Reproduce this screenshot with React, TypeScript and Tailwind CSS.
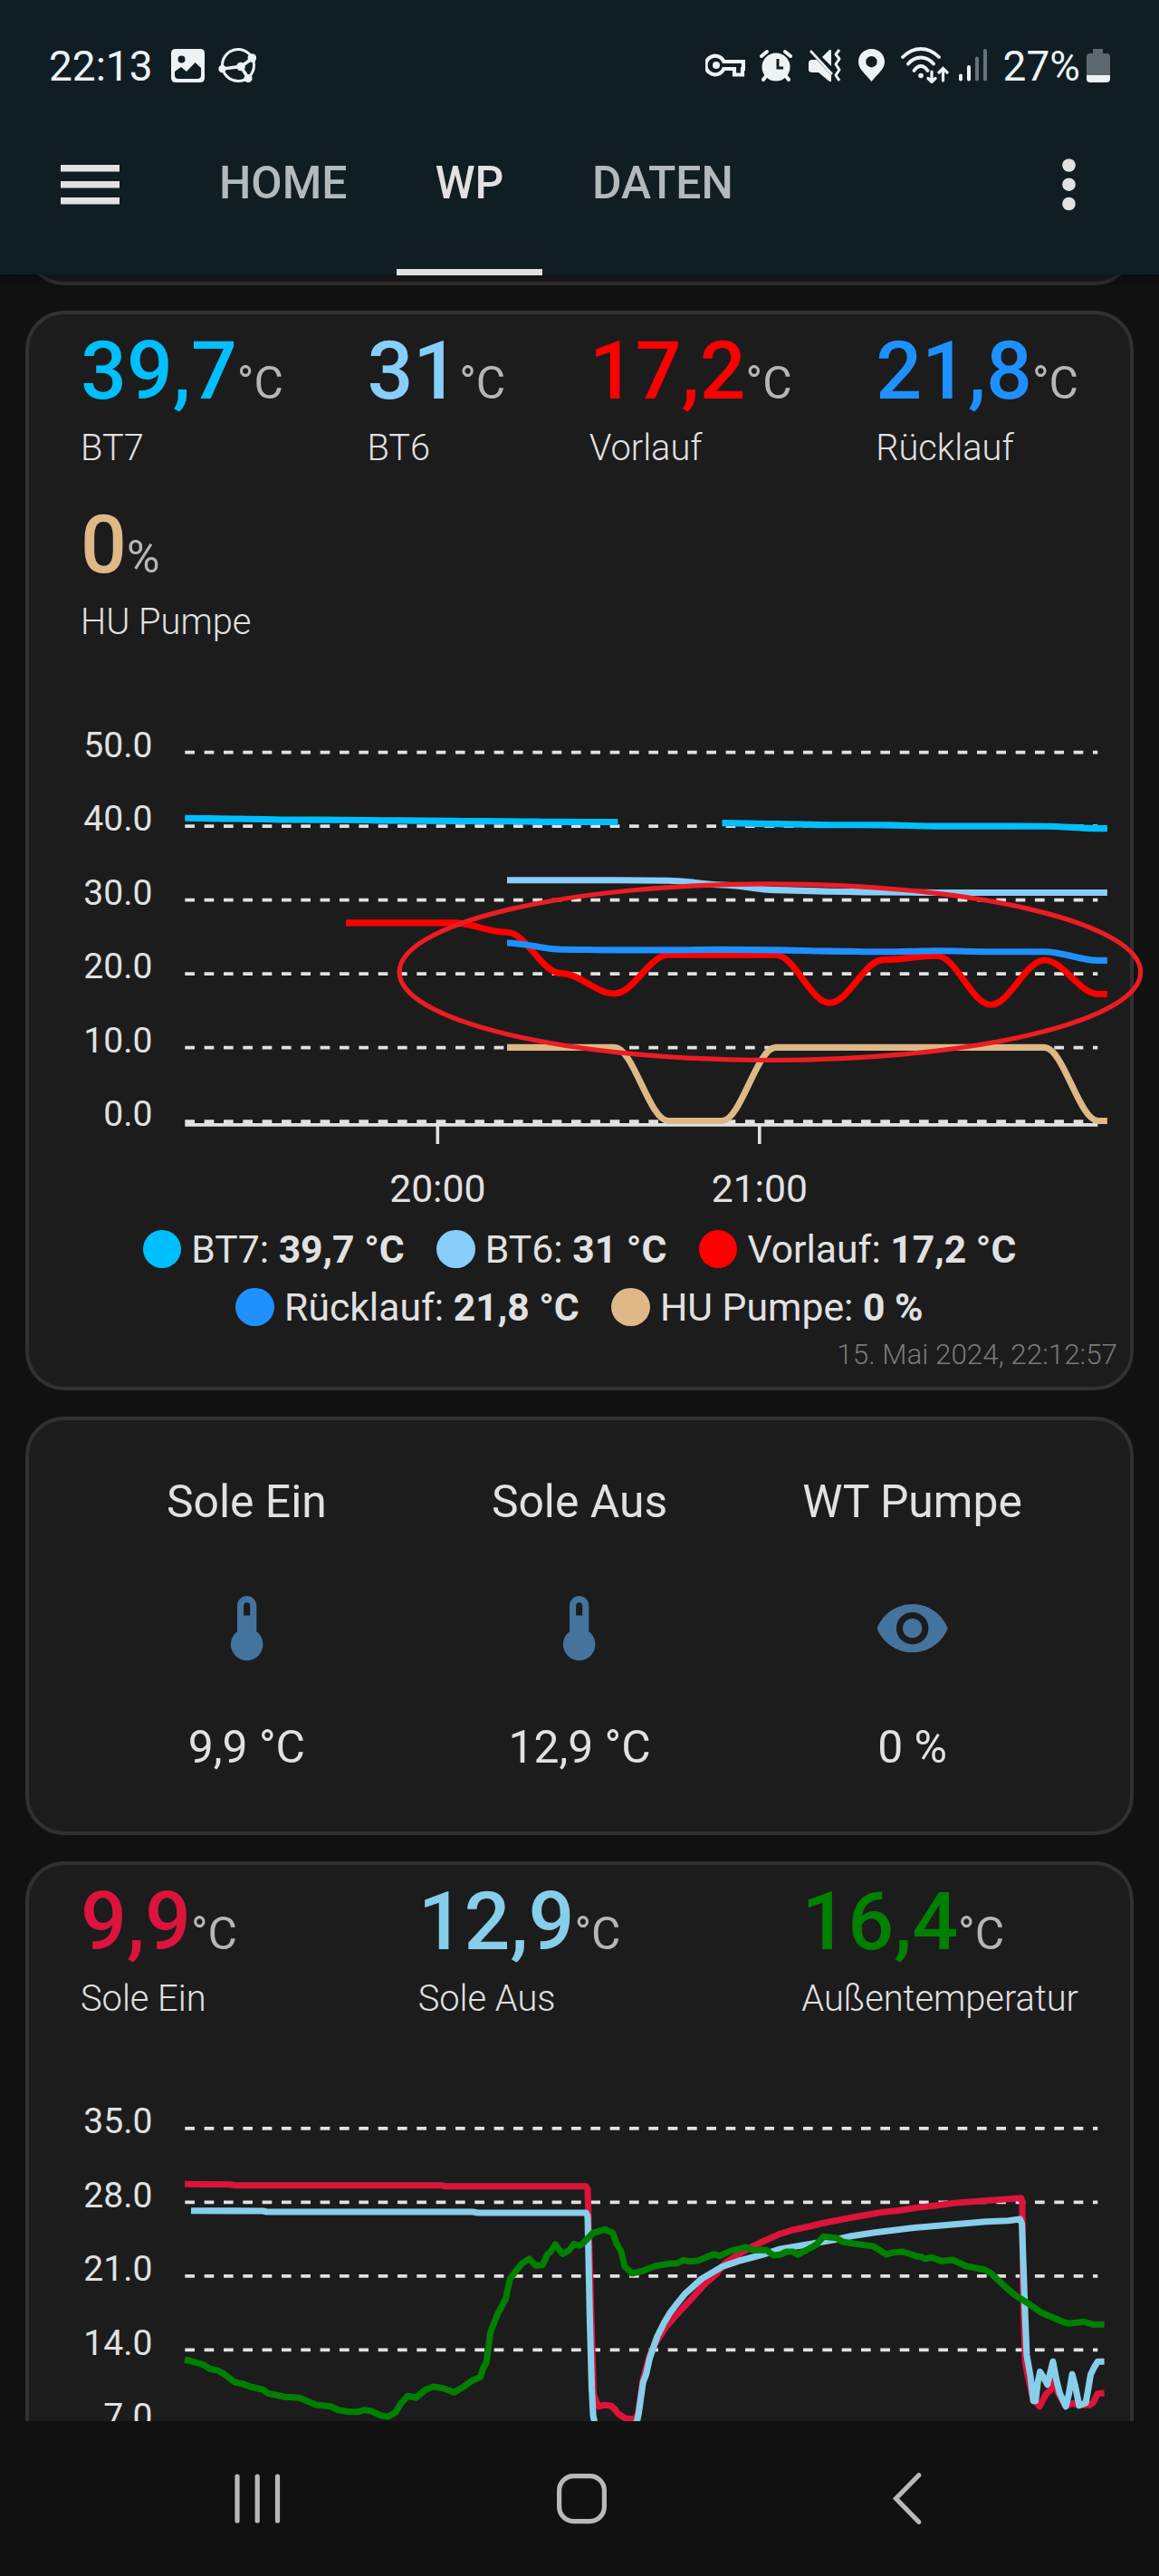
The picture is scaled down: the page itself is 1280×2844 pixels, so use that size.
import React from "react";

type Pt = [number, number];

const AXIS = "#e1e1e1";

// Cubic smoothing with horizontal tangents at every sample.
function smooth(pts: Pt[]): string {
  return pts
    .map(([x, y], i) => {
      if (i === 0) return `M${x} ${y}`;
      const [px, py] = pts[i - 1];
      const d = (x - px) * 0.35;
      return `C${px + d} ${py} ${x - d} ${y} ${x} ${y}`;
    })
    .join("");
}

const STEP = 59.35;
const series = (start: number, ys: number[], tail = false): string => {
  const pts: Pt[] = ys.map((y, i) => [start + i * STEP, y]);
  if (tail) pts.push([1222.9, ys[ys.length - 1]]);
  return smooth(pts);
};

const FLOW_LINES = [
  { color: "#00bfff", d: series(204.3, [903.2, 904, 905, 905.3, 905.9, 906.4, 906.8, 907.4, 907.5]) + "H682.4" },
  { color: "#00bfff", d: series(797.5, [908.6, 909.6, 910.7, 910.9, 912.1, 912.1, 912.2, 914.6], true) },
  { color: "#87cefa", d: series(560, [971.8, 971.8, 971.8, 972.2, 977, 982.6, 984.2, 985, 985.5, 985.5, 985.5, 985.5], true) },
  { color: "#ff0000", d: series(382, [1018.9, 1018.9, 1018.9, 1029.3, 1074.6, 1097, 1054.3, 1054.3, 1054.3, 1107.2, 1059.6, 1055.2, 1109.3, 1060, 1097.5], true) },
  { color: "#1e90ff", d: series(560, [1041, 1048.2, 1048.9, 1048.9, 1048.4, 1048.9, 1050.1, 1050.8, 1049.8, 1050.7, 1050.7, 1060.4], true) },
  { color: "#deb887", d: series(560, [1156.4, 1156.4, 1156.4, 1237.5, 1237.5, 1156.4, 1156.4, 1156.4, 1156.4, 1156.4, 1156.4, 1237.5], true) },
];

// Samples are recorded on a finer raster; plot() maps them to chart coordinates.
const plot = (ox: number, raw: number[]): string => {
  const out: string[] = [];
  for (let i = 0; i < raw.length; i += 2) {
    out.push(`${(ox + raw[i] / 2.45).toFixed(1)},${(2360 + raw[i + 1] / 3).toFixed(1)}`);
  }
  return out.join(" ");
};

const SOLE_EIN =
  plot(0, [500, 154, 622, 155, 635, 158, 1195, 158, 1205, 161, 1568, 161]) +
  " " +
  plot(640, [
    18, 161, 22, 170, 38, 850, 45, 872, 52, 890, 68, 886, 85, 888, 96, 900, 105, 915, 125, 930, 150, 933, 158, 915, 165, 860, 172, 800, 190, 720, 203, 685,
    235, 625, 270, 577, 300, 538, 335, 490, 370, 452, 395, 415, 430, 387, 465, 362, 500, 342, 540, 320, 580, 305, 620, 295, 660, 283, 740, 264, 820, 247, 860, 242,
    920, 231, 960, 226, 1020, 216, 1120, 207, 1195, 200, 1198, 215, 1200, 500, 1206, 745, 1215, 800, 1228, 870, 1238, 880, 1245, 890, 1262, 850, 1273, 838,
    1280, 805, 1295, 845, 1315, 888, 1335, 880, 1352, 886, 1380, 886, 1390, 878, 1402, 848, 1420, 846,
  ]);

const SOLE_AUS =
  plot(0, [517, 242, 712, 243, 722, 246, 1280, 246, 1292, 249, 1568, 249]) +
  " " +
  plot(640, [
    18, 249, 22, 260, 28, 600, 33, 830, 37, 920, 41, 945, 90, 1010, 155, 942, 160, 915, 172, 810, 180, 785, 190, 730, 210, 660, 228, 615, 245, 580, 265, 548, 285, 518, 330, 468, 385, 428,
    430, 409, 495, 388, 540, 370, 620, 353, 700, 336, 735, 326, 800, 314, 900, 299, 1000, 289, 1100, 278, 1160, 275, 1192, 270, 1197, 285, 1205, 560, 1210, 720, 1220, 790,
    1228, 872, 1234, 872, 1240, 810, 1246, 776, 1256, 795, 1266, 818, 1281, 742, 1290, 800, 1299, 845, 1316, 890, 1324, 850, 1333, 784, 1341, 820, 1352, 887,
    1370, 878, 1377, 830, 1383, 785, 1393, 760, 1402, 742, 1420, 742,
  ]);

const AUSSEN =
  plot(0, [
    500, 735, 525, 743, 550, 752, 568, 766, 590, 772, 605, 782, 635, 810, 655, 815, 680, 826, 710, 834, 725, 847, 770, 859, 810, 862, 855, 885, 895, 890, 915, 902,
    945, 908, 970, 908, 985, 902, 1005, 906, 1030, 920, 1050, 925, 1070, 910, 1085, 880, 1103, 856, 1125, 862, 1150, 836, 1172, 825, 1200, 830, 1228, 844,
    1255, 825, 1280, 803, 1300, 793, 1307, 765, 1316, 745, 1321, 700, 1327, 645, 1335, 620, 1345, 588, 1355, 565, 1368, 535, 1380, 468, 1392, 448, 1413, 416,
    1432, 402, 1450, 424, 1468, 422, 1482, 385, 1490, 378, 1502, 354, 1522, 385, 1540, 373, 1553, 352, 1568, 358,
  ]) +
  " " +
  plot(640, [
    8, 352, 35, 317, 52, 310, 68, 304, 90, 316, 100, 350, 112, 375, 122, 425, 142, 450, 170, 442, 205, 425, 245, 417, 265, 416, 280, 406, 300, 410, 320, 408, 345, 395,
    365, 386, 378, 392, 410, 375, 450, 363, 470, 373, 505, 372, 525, 390, 545, 387, 560, 378, 578, 378, 590, 388, 615, 372, 640, 355, 660, 328, 695, 332, 712, 345,
    745, 352, 795, 360, 830, 387, 850, 380, 875, 378, 910, 392, 925, 395, 935, 402, 953, 397, 980, 409, 1010, 405, 1045, 425, 1095, 437, 1112, 448, 1150, 492,
    1180, 523, 1215, 550, 1250, 580, 1310, 611, 1325, 616, 1365, 610, 1390, 619, 1420, 619,
  ]);

function Grid({ labels, top }: { labels: string[]; top: number }) {
  return (
    <g>
      {labels.map((l, i) => {
        const y = top + i * 81.5;
        return (
          <g key={l}>
            <line x1={204.3} x2={1212.3} y1={y} y2={y} stroke={AXIS} strokeWidth={3.8} strokeDasharray="10.667 10.667" />
            <text x={168.5} y={y + 5.2} fill={AXIS} fontSize={39.1} textAnchor="end">
              {l}
            </text>
          </g>
        );
      })}
    </g>
  );
}

function FlowChart() {
  return (
    <svg className="relative mt-[69px] block h-[560px] w-full shrink-0 overflow-visible font-[Roboto]" viewBox="32 780 1216 560">
      <Grid labels={["50.0", "40.0", "30.0", "20.0", "10.0", "0.0"]} top={830.7} />
      <path d="M204.3 1241.9H1212.3M483.3 1242V1263M838.8 1242V1263" stroke={AXIS} strokeWidth={3.6} />
      <text x={483.3} y={1327} fill={AXIS} fontSize={42.67} textAnchor="middle">
        20:00
      </text>
      <text x={838.8} y={1327} fill={AXIS} fontSize={42.67} textAnchor="middle">
        21:00
      </text>
      {FLOW_LINES.map((l, i) => (
        <path key={i} d={l.d} fill="none" stroke={l.color} strokeWidth={7.1} />
      ))}
      <ellipse cx={850.4} cy={1073.2} rx={409.3} ry={97.3} fill="none" stroke="#ed1c24" strokeWidth={5.2} />
    </svg>
  );
}

function BrineChart() {
  return (
    <svg className="mt-[69px] block h-[380px] w-full shrink-0 font-[Roboto]" viewBox="32 2300 1216 380">
      <Grid labels={["35.0", "28.0", "21.0", "14.0", "7.0"]} top={2349.9} />
      {[
        ["#dc143c", SOLE_EIN],
        ["#87ceeb", SOLE_AUS],
        ["#008000", AUSSEN],
      ].map(([c, p]) => (
        <polyline key={c} points={p} fill="none" stroke={c} strokeWidth={7.1} strokeLinejoin="round" />
      ))}
    </svg>
  );
}

function Stat({ value, unit, label, color }: { value: string; unit: string; label: string; color: string }) {
  return (
    <div>
      <div className="flex h-24 items-baseline whitespace-nowrap">
        <span className="text-[89.6px] leading-[96px] font-medium" style={{ color }}>
          {value}
        </span>
        <span className="text-[49.8px] leading-[50px] text-[#b6b6b6]">{unit}</span>
      </div>
      <div className="mt-[13px] text-[39.8px] leading-[48px] font-light">{label}</div>
    </div>
  );
}

function Legend({ name, value, color }: { name: string; value: string; color: string }) {
  return (
    <div className="flex items-center whitespace-nowrap">
      <span className="mr-[11px] size-[42.67px] rounded-full" style={{ background: color }} />
      <span>
        {name}: <span className="font-bold">{value}</span>
      </span>
    </div>
  );
}

const THERMO =
  "M15 13V5A3 3 0 0 0 9 5V13A5 5 0 1 0 15 13M12 4A1 1 0 0 1 13 5V8H11V5A1 1 0 0 1 12 4Z";
const EYE =
  "M12,9A3,3 0 0,0 9,12A3,3 0 0,0 12,15A3,3 0 0,0 15,12A3,3 0 0,0 12,9M12,17A5,5 0 0,1 7,12A5,5 0 0,1 12,7A5,5 0 0,1 17,12A5,5 0 0,1 12,17M12,4.5C7,4.5 2.73,7.61 1,12C2.73,16.39 7,19.5 12,19.5C17,19.5 21.27,16.39 23,12C21.27,7.61 17,4.5 12,4.5Z";

function Glance({ name, icon, value }: { name: string; icon: string; value: string }) {
  return (
    <div className="flex w-[367.6px] flex-col items-center text-[49.8px] leading-[60px]">
      <div>{name}</div>
      <svg className="mt-[67px] size-[85.33px]" viewBox="0 0 24 24" fill="#44739e">
        <path d={icon} />
      </svg>
      <div className="mt-[59px]">{value}</div>
    </div>
  );
}

const CARD = "flex flex-col rounded-[43px] border-4 border-[#313131] bg-[#1c1c1c]";

function StatusBar() {
  return (
    <div className="flex h-[104px] items-center pt-10 pr-[54px] pl-[54px] text-[46px] leading-[64px] text-[#edf2f4]">
      <span className="mt-[2px]">22:13</span>
      <svg className="ml-[20px] h-[37px] w-[37px]" viewBox="0 0 37 37">
        <path
          fillRule="evenodd"
          fill="#edf2f4"
          d="M5 0H32Q37 0 37 5V32Q37 37 32 37H5Q0 37 0 32V5Q0 0 5 0ZM11.5 7.5A4 4 0 1 0 11.5 15.5A4 4 0 1 0 11.5 7.5ZM4 25V29Q4 33 8 33H29Q33 33 33 29V21L26.500 15L17 25L11 20Z"
        />
      </svg>
      <svg className="ml-[15px] h-[40px] w-[43px]" viewBox="0 0 43 40" fill="none" stroke="#edf2f4" strokeWidth="3">
        <circle cx="22" cy="20" r="17.500" />
        <path d="M4 24L25 21.500M25 21.500L37 13M25 21.500L33 34" strokeWidth="3.600" />
        <g fill="#edf2f4" stroke="none">
          <circle cx="4.500" cy="24" r="4.200" />
          <circle cx="25" cy="21.500" r="4.800" />
          <circle cx="37.300" cy="12" r="4.800" />
          <circle cx="33" cy="34.500" r="4.600" />
        </g>
      </svg>
      <div className="ml-auto flex items-center">
        <svg className="h-[28px] w-[44px]" viewBox="0 0 44 28" fill="none" stroke="#edf2f4">
          <path strokeWidth="4.200" d="M20.300 10H42V18H41V24.500H32V18H20.300A10.300 10.300 0 1 1 20.300 10Z" />
          <circle cx="12" cy="14" r="4" fill="#edf2f4" stroke="none" />
        </svg>
        <svg className="ml-4 h-[36px] w-[36px]" viewBox="0 0 36 36">
          <circle cx="18" cy="20" r="15.500" fill="#edf2f4" />
          <path d="M2 8L8 3M34 8L28 3" stroke="#edf2f4" strokeWidth="4" strokeLinecap="round" />
          <path d="M7 30L4 34M29 30L32 34" stroke="#edf2f4" strokeWidth="4" strokeLinecap="round" />
          <path d="M20 11V21H26" stroke="#101e24" strokeWidth="3" fill="none" />
        </svg>
        <svg className="ml-[18px] h-[36px] w-[37px]" viewBox="0 0 37 36">
          <path fill="#edf2f4" d="M0 16Q0 12 4 12H9L25 29V36H23L11 26H4Q0 26 0 23ZM15 9L23 1H25V19Z" />
          <path d="M2 2L26 28" stroke="#edf2f4" strokeWidth="2.600" />
          <path d="M34 1L30 6L34 11L30 17L34 23L30 29L34 35" stroke="#edf2f4" strokeWidth="3" fill="none" strokeLinejoin="round" />
        </svg>
        <svg className="ml-[18px] h-[36px] w-[29px]" viewBox="0 0 29 36">
          <path fill="#edf2f4" fillRule="evenodd" d="M14.500 0C6 0 0 6.500 0 14.300C0 22 7 27 14.500 36C22 27 29 22 29 14.300C29 6.500 23 0 14.500 0ZM14.500 8A6.200 6.200 0 1 1 14.500 20.400A6.200 6.200 0 1 1 14.500 8Z" />
        </svg>
        <svg className="ml-[18px] h-[40px] w-[53px]" viewBox="0 0 53 40" fill="none" stroke="#edf2f4" strokeWidth="3.800" strokeLinecap="round">
          <path d="M2 11Q11 2 22 2T42 11M8 18.500Q14 11.500 22 11.500T36 18.500M14.500 26Q18 21 22 21T29.500 26" />
          <circle cx="22" cy="31.500" r="2.800" fill="#edf2f4" stroke="none" />
          <path strokeWidth="3.200" d="M34 27V38M30 34.500L34 38.500L38 34.500M46.500 37V24M42 28L46.500 23.500L51 28" />
        </svg>
        <svg className="ml-[10px] h-[36px] w-[34px]" viewBox="0 0 34 36" fill="none" strokeWidth="4" strokeLinecap="round">
          <path stroke="#edf2f4" d="M3 29.500V33.500M12 20V33.500" />
          <path stroke="#66737a" d="M21 10.500V33.500M30 2V33.500" />
        </svg>
        <span className="mt-[2px] ml-4">27%</span>
        <svg className="ml-[7px] h-[37px] w-[26px]" viewBox="0 0 26 37">
          <path fill="#5d686e" d="M7 0H18V5H22Q26 5 26 9V29H0V9Q0 5 4 5H7Z" />
          <path fill="#edf2f4" d="M0 29H26V33Q26 37 22 37H4Q0 37 0 33Z" />
        </svg>
      </div>
    </div>
  );
}

function Toolbar() {
  return (
    <div className="flex h-[199px] items-stretch pl-[67px] text-[49.8px] leading-[197px] font-medium whitespace-nowrap">
      <svg className="mt-[78px] h-[44px] w-[65px]" viewBox="0 0 65 44" fill="#e1e1e1">
        <path d="M0 0H65V7.500H0ZM0 18H65V25.500H0ZM0 36H65V43.500H0Z" />
      </svg>
      <div className="ml-[110px] w-[196px] text-[#b4b9bb]">HOME</div>
      <div className="h-[199.500px] w-[161px] border-b-[7px] border-[#e1e1e1] text-center">WP</div>
      <div className="ml-[55px] text-[#b4b9bb]">DATEN</div>
      <svg className="mt-[70px] mr-[92px] ml-auto h-[60px] w-[15px]" viewBox="0 0 15 60" fill="#e1e1e1">
        <circle cx="7.500" cy="8.500" r="7.300" />
        <circle cx="7.500" cy="29.700" r="7.300" />
        <circle cx="7.500" cy="51" r="7.300" />
      </svg>
    </div>
  );
}

export default function App() {
  return (
    <div className="flex h-[2844px] w-[1280px] flex-col overflow-hidden bg-[#111111] font-[Roboto,sans-serif] text-[#e1e1e1]">
      <header className="z-10 h-[303px] shrink-0 bg-[#101e24] shadow-[0_4px_14px_rgba(0,0,0,0.45)]">
        <StatusBar />
        <Toolbar />
      </header>

      <main className="flex h-[2370px] shrink-0 flex-col overflow-hidden px-7">
        <div className="flex h-3 shrink-0 flex-col justify-end overflow-hidden">
          <div className="h-[120px] shrink-0 rounded-[43px] border-4 border-[#313131] bg-[#1c1c1c]" />
        </div>

        <section className={`${CARD} mt-7 h-[1192px] shrink-0`}>
          <div className="flex flex-wrap justify-between gap-x-[57px] gap-y-[35px] px-[57px] pt-[15px]">
            <Stat value="39,7" unit="°C" label="BT7" color="#00bfff" />
            <Stat value="31" unit="°C" label="BT6" color="#87cefa" />
            <Stat value="17,2" unit="°C" label="Vorlauf" color="#ff0000" />
            <Stat value="21,8" unit="°C" label="Rücklauf" color="#1e90ff" />
            <Stat value="0" unit="%" label="HU Pumpe" color="#deb887" />
          </div>
          <FlowChart />
          <div className="mt-[7px] text-[42.67px] leading-[64px]">
            <div className="flex justify-center gap-[35.500px]">
              <Legend name="BT7" value="39,7 °C" color="#00bfff" />
              <Legend name="BT6" value="31 °C" color="#87cefa" />
              <Legend name="Vorlauf" value="17,2 °C" color="#ff0000" />
            </div>
            <div className="flex justify-center gap-[35.500px]">
              <Legend name="Rücklauf" value="21,8 °C" color="#1e90ff" />
              <Legend name="HU Pumpe" value="0 %" color="#deb887" />
            </div>
          </div>
          <div className="mt-[3px] pr-[14px] text-right text-[31.400px] leading-9 font-light text-[#7a7a7a]">15. Mai 2024, 22:12:57</div>
        </section>

        <section className={`${CARD} mt-[29px] h-[462px] shrink-0`}>
          <div className="flex justify-center pt-[60px]">
            <Glance name="Sole Ein" icon={THERMO} value="9,9 °C" />
            <Glance name="Sole Aus" icon={THERMO} value="12,9 °C" />
            <Glance name="WT Pumpe" icon={EYE} value="0 %" />
          </div>
        </section>

        <section className={`${CARD} mt-[29px] h-[1000px] shrink-0`}>
          <div className="flex justify-between px-[57px] pt-[15px]">
            <Stat value="9,9" unit="°C" label="Sole Ein" color="#dc143c" />
            <Stat value="12,9" unit="°C" label="Sole Aus" color="#87ceeb" />
            <Stat value="16,4" unit="°C" label="Außentemperatur" color="#008000" />
          </div>
          <BrineChart />
        </section>
      </main>

      <nav className="h-[171px] shrink-0 pt-[57px] pl-[259px]">
        <div className="flex items-center">
          <svg className="h-[57px] w-[51px]" viewBox="0 0 51 57" stroke="#b9b9b9" strokeWidth="5.200" strokeLinecap="round">
            <path d="M3 4V53M25.200 4V53M47.500 4V53" />
          </svg>
          <svg className="ml-[305px] h-[57px] w-[55px]" viewBox="0 0 55 57" fill="none" stroke="#b9b9b9" strokeWidth="5.200">
            <rect x="2.600" y="3.600" width="49.800" height="50" rx="16" />
          </svg>
          <svg className="ml-[315px] h-[57px] w-[35px]" viewBox="0 0 35 57" fill="none" stroke="#b9b9b9" strokeWidth="5.200" strokeLinecap="round">
            <path d="M29.700 2.700L4.500 28.500L29.700 54.300" />
          </svg>
        </div>
      </nav>
    </div>
  );
}
